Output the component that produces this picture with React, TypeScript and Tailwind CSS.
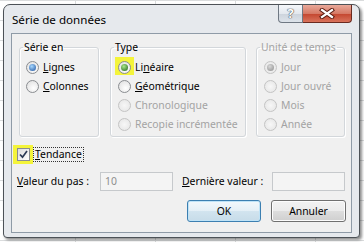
import type { ReactNode } from "react";

function Radio({ checked = false, disabled = false, dot = "blue" }: { checked?: boolean; disabled?: boolean; dot?: "blue" | "green" }) {
  return (
    <span
      className={`flex items-center justify-center w-[13px] h-[13px] rounded-full border shrink-0 ${
        disabled
          ? "border-[#c4c4c4] bg-[radial-gradient(circle_at_50%_50%,#f7f7f7,#e4e4e4)]"
          : "border-[#8a8d91] bg-[radial-gradient(circle_at_60%_65%,#ffffff,#dcdcdc)]"
      }`}
    >
      {checked && (
        <span
          className={`w-[7px] h-[7px] rounded-full ${
            disabled
              ? "bg-[radial-gradient(circle_at_40%_35%,#d8d8d8,#8d8d8d)]"
              : dot === "green"
              ? "bg-[radial-gradient(circle_at_40%_35%,#a8e88a,#1d5f16)]"
              : "bg-[radial-gradient(circle_at_40%_35%,#a7d8ff,#1b4f9c)]"
          }`}
        />
      )}
    </span>
  );
}

function RadioRow({ pl, children, checked, disabled, highlight }: { pl: string; children: ReactNode; checked?: boolean; disabled?: boolean; highlight?: boolean }) {
  return (
    <div className={`flex items-center h-[19px] ${pl}`}>
      <span className="relative flex">
        {highlight && <span className="absolute left-[-3px] top-[-4px] w-[19px] h-[18px] bg-[#f4f43a]" />}
        <span className="relative">
          <Radio checked={checked} disabled={disabled} dot={highlight ? "green" : "blue"} />
        </span>
      </span>
      <span className={`ml-[4px] whitespace-nowrap ${disabled ? "text-[#a3a3a3]" : "text-black"}`}>{children}</span>
    </div>
  );
}

function Group({ title, width, disabled, children }: { title: string; width: string; disabled?: boolean; children: ReactNode }) {
  return (
    <fieldset className={`${width} h-[97px] border border-[#d3d7db] rounded-[3px] shadow-[inset_1px_1px_0_#ffffff,1px_1px_0_#ffffff]`}>
      <legend className={`ml-[3px] px-[1px] leading-[15px] whitespace-nowrap ${disabled ? "text-[#a3a3a3]" : "text-black"}`}>{title}</legend>
      <div className="flex flex-col pt-[3px]">{children}</div>
    </fieldset>
  );
}

export default function App() {
  return (
    <div className="w-[364px] h-[242px] overflow-hidden bg-white bg-[image:linear-gradient(to_right,#dadcdd_1px,transparent_1px),linear-gradient(to_bottom,#dadcdd_1px,transparent_1px)] bg-[size:80px_20px] bg-[position:75px_0px] pl-[3px] pt-[4px] font-['Noto_Sans',sans-serif] text-[10.4px] leading-[15px]">
      <div className="w-[357px] h-[234px] rounded-t-[7px] rounded-b-[4px] border border-[#4d5257] bg-[#e6e9ed] shadow-[2px_2px_3px_rgba(0,0,0,0.45)] flex flex-col px-[7px]">
        {/* Title bar */}
        <div className="h-[28px] flex items-start justify-between">
          <span className="pl-[1px] pt-[7px] text-[11.6px] leading-[16px] text-black">Série de données</span>
          <div className="flex">
            <div className="w-[25px] h-[18px] flex items-center justify-center border border-t-0 border-[#6f7883] rounded-bl-[4px] bg-[linear-gradient(to_bottom,#f5f7fa,#e3e8ee_50%,#ccd3dc_51%,#dde3ea)]">
              <span className="text-[13px] font-bold leading-none text-white [text-shadow:0_0_1px_#4a4f55,0_0_1px_#4a4f55,0_0_1px_#4a4f55]">?</span>
            </div>
            <div className="w-[49px] h-[18px] flex items-center justify-center border border-t-0 border-l-0 border-[#6a2a20] rounded-br-[4px] bg-[linear-gradient(to_bottom,#e9a99a,#d67a66_50%,#c3452e_51%,#d9735c)]">
              <svg width="16" height="11" viewBox="0 0 16 11">
                <path d="M3 2 L13 9 M13 2 L3 9" stroke="#5b1d13" strokeWidth="4.2" strokeLinecap="square" fill="none" />
                <path d="M3 2 L13 9 M13 2 L3 9" stroke="#ffffff" strokeWidth="2.2" strokeLinecap="square" fill="none" />
              </svg>
            </div>
          </div>
        </div>

        {/* Client area */}
        <div className="h-[200px] border border-[#8f9ba7] bg-[#f0f0f0] flex flex-col">
          <div className="flex mt-[6px] pl-[7px]">
            <Group title="Série en" width="w-[80px]">
              <RadioRow pl="pl-[6px]" checked>
                <span className="underline">L</span>ignes
              </RadioRow>
              <RadioRow pl="pl-[6px]">
                <span className="underline">C</span>olonnes
              </RadioRow>
            </Group>
            <div className="ml-[11px]">
              <Group title="Type" width="w-[136px]">
                <RadioRow pl="pl-[7px]" checked highlight>
                  Li<span className="underline">n</span>éaire
                </RadioRow>
                <RadioRow pl="pl-[7px]">
                  <span className="underline">G</span>éométrique
                </RadioRow>
                <RadioRow pl="pl-[7px]" disabled>
                  Chronologique
                </RadioRow>
                <RadioRow pl="pl-[7px]" disabled>
                  Recopie incrémentée
                </RadioRow>
              </Group>
            </div>
            <div className="ml-[10px]">
              <Group title="Unité de temps" width="w-[89px]" disabled>
                <RadioRow pl="pl-[7px]" disabled checked>
                  Jour
                </RadioRow>
                <RadioRow pl="pl-[7px]" disabled>
                  Jour ouvré
                </RadioRow>
                <RadioRow pl="pl-[7px]" disabled>
                  Mois
                </RadioRow>
                <RadioRow pl="pl-[7px]" disabled>
                  Année
                </RadioRow>
              </Group>
            </div>
          </div>

          {/* Tendance */}
          <div className="flex items-center h-[19px] mt-[8px] pl-[1px]">
            <div className="w-[20px] h-[19px] bg-[#f4f43a] flex items-center justify-center">
              <span className="w-[13px] h-[13px] border border-[#8a8d91] bg-[linear-gradient(135deg,#dcdcdc,#ffffff)] flex items-center justify-center">
                <svg width="9" height="9" viewBox="0 0 9 9">
                  <path d="M1 4.5 L3.5 7.2 L8 1" stroke="#2b3a55" strokeWidth="1.7" fill="none" />
                </svg>
              </span>
            </div>
            <span className="h-[15px] px-[1px] border border-dotted border-[#333] leading-[13px] text-black">
              <span className="underline">T</span>endance
            </span>
          </div>

          {/* Values */}
          <div className="flex items-center h-[19px] mt-[8px] pl-[5px]">
            <span className="w-[83px] text-black whitespace-nowrap">
              <span className="underline">V</span>aleur du pas :
            </span>
            <div className="w-[73px] h-[19px] border border-[#c6c9cc] bg-[#f4f4f4] flex items-center pl-[4px] text-[#8e8e8e]">10</div>
            <span className="ml-[9px] w-[90px] text-black whitespace-nowrap">
              <span className="underline">D</span>ernière valeur :
            </span>
            <div className="w-[73px] h-[19px] border border-[#c6c9cc] bg-[#f4f4f4]" />
          </div>

          {/* Buttons */}
          <div className="flex justify-end gap-[10px] mt-[9px] pr-[5px]">
            <button className="w-[74px] h-[22px] rounded-[3px] border border-[#3c7fb1] bg-[linear-gradient(to_bottom,#f2f8fc,#e4eff6_50%,#d2e4ef_51%,#c7dce9)] shadow-[inset_0_0_0_1px_#bfe3f7] text-black">
              OK
            </button>
            <button className="w-[75px] h-[22px] rounded-[3px] border border-[#707070] bg-[linear-gradient(to_bottom,#f2f2f2,#ebebeb_50%,#dddddd_51%,#cfcfcf)] shadow-[inset_0_0_0_1px_#fcfcfc] text-black">
              Annuler
            </button>
          </div>
        </div>
      </div>
    </div>
  );
}
